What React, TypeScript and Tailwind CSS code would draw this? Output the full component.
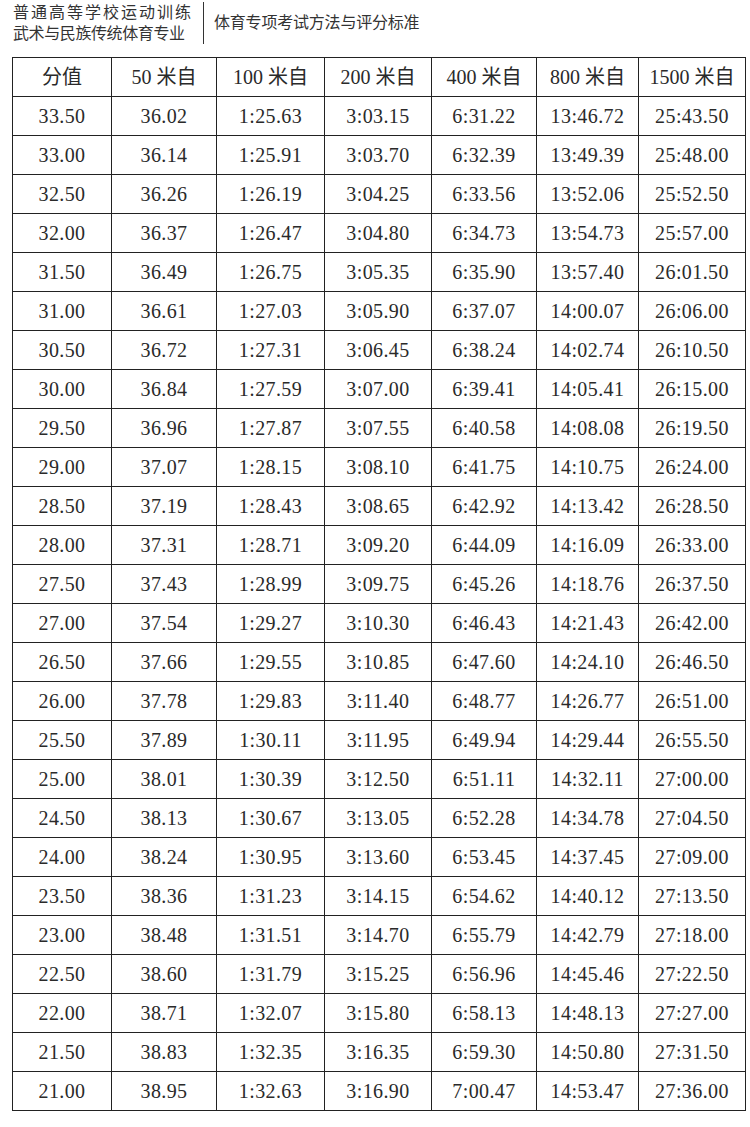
const headers = ["分值", "50 米自", "100 米自", "200 米自", "400 米自", "800 米自", "1500 米自"];

const colWidths = ["w-[99px]", "w-[105px]", "w-[108px]", "w-[107px]", "w-[105px]", "w-[102px]", "w-[107px]"];

const rows: string[][] = [
  ["33.50", "36.02", "1:25.63", "3:03.15", "6:31.22", "13:46.72", "25:43.50"],
  ["33.00", "36.14", "1:25.91", "3:03.70", "6:32.39", "13:49.39", "25:48.00"],
  ["32.50", "36.26", "1:26.19", "3:04.25", "6:33.56", "13:52.06", "25:52.50"],
  ["32.00", "36.37", "1:26.47", "3:04.80", "6:34.73", "13:54.73", "25:57.00"],
  ["31.50", "36.49", "1:26.75", "3:05.35", "6:35.90", "13:57.40", "26:01.50"],
  ["31.00", "36.61", "1:27.03", "3:05.90", "6:37.07", "14:00.07", "26:06.00"],
  ["30.50", "36.72", "1:27.31", "3:06.45", "6:38.24", "14:02.74", "26:10.50"],
  ["30.00", "36.84", "1:27.59", "3:07.00", "6:39.41", "14:05.41", "26:15.00"],
  ["29.50", "36.96", "1:27.87", "3:07.55", "6:40.58", "14:08.08", "26:19.50"],
  ["29.00", "37.07", "1:28.15", "3:08.10", "6:41.75", "14:10.75", "26:24.00"],
  ["28.50", "37.19", "1:28.43", "3:08.65", "6:42.92", "14:13.42", "26:28.50"],
  ["28.00", "37.31", "1:28.71", "3:09.20", "6:44.09", "14:16.09", "26:33.00"],
  ["27.50", "37.43", "1:28.99", "3:09.75", "6:45.26", "14:18.76", "26:37.50"],
  ["27.00", "37.54", "1:29.27", "3:10.30", "6:46.43", "14:21.43", "26:42.00"],
  ["26.50", "37.66", "1:29.55", "3:10.85", "6:47.60", "14:24.10", "26:46.50"],
  ["26.00", "37.78", "1:29.83", "3:11.40", "6:48.77", "14:26.77", "26:51.00"],
  ["25.50", "37.89", "1:30.11", "3:11.95", "6:49.94", "14:29.44", "26:55.50"],
  ["25.00", "38.01", "1:30.39", "3:12.50", "6:51.11", "14:32.11", "27:00.00"],
  ["24.50", "38.13", "1:30.67", "3:13.05", "6:52.28", "14:34.78", "27:04.50"],
  ["24.00", "38.24", "1:30.95", "3:13.60", "6:53.45", "14:37.45", "27:09.00"],
  ["23.50", "38.36", "1:31.23", "3:14.15", "6:54.62", "14:40.12", "27:13.50"],
  ["23.00", "38.48", "1:31.51", "3:14.70", "6:55.79", "14:42.79", "27:18.00"],
  ["22.50", "38.60", "1:31.79", "3:15.25", "6:56.96", "14:45.46", "27:22.50"],
  ["22.00", "38.71", "1:32.07", "3:15.80", "6:58.13", "14:48.13", "27:27.00"],
  ["21.50", "38.83", "1:32.35", "3:16.35", "6:59.30", "14:50.80", "27:31.50"],
  ["21.00", "38.95", "1:32.63", "3:16.90", "7:00.47", "14:53.47", "27:36.00"],
];

export default function App() {
  return (
    <div className="w-[750px] h-[1127px] bg-white text-[#2a2a2a] font-['Liberation_Serif','Noto_Sans_CJK_SC',serif]">
      {/* 页眉 */}
      <div className="flex items-center pl-[13px] pt-[2px] h-[44px]">
        <div className="flex flex-col text-[16px] leading-[21px] text-[#333]">
          <span className="tracking-[2px]">普通高等学校运动训练</span>
          <span className="tracking-[-0.4px]">武术与民族传统体育专业</span>
        </div>
        <div className="w-px h-[42px] bg-[#333] ml-[10px] mr-[10px]"></div>
        <div className="text-[16px] text-[#333] tracking-[-0.2px]">体育专项考试方法与评分标准</div>
      </div>

      {/* 成绩表 */}
      <div className="pl-[12px] pt-[13px]">
        <table className="table-fixed border-collapse w-[733px] text-[20px]">
          <colgroup>
            {colWidths.map((w, i) => (
              <col key={i} className={w} />
            ))}
          </colgroup>
          <thead>
            <tr className="h-[39px]">
              {headers.map((h) => (
                <th key={h} className="border border-[#222] font-normal text-center p-0 leading-none">
                  {h}
                </th>
              ))}
            </tr>
          </thead>
          <tbody>
            {rows.map((r) => (
              <tr key={r[0]} className="h-[39px]">
                {r.map((c, i) => (
                  <td key={i} className="border border-[#222] text-center p-0 leading-none tracking-[0.4px]">
                    {c}
                  </td>
                ))}
              </tr>
            ))}
          </tbody>
        </table>
      </div>
    </div>
  );
}
